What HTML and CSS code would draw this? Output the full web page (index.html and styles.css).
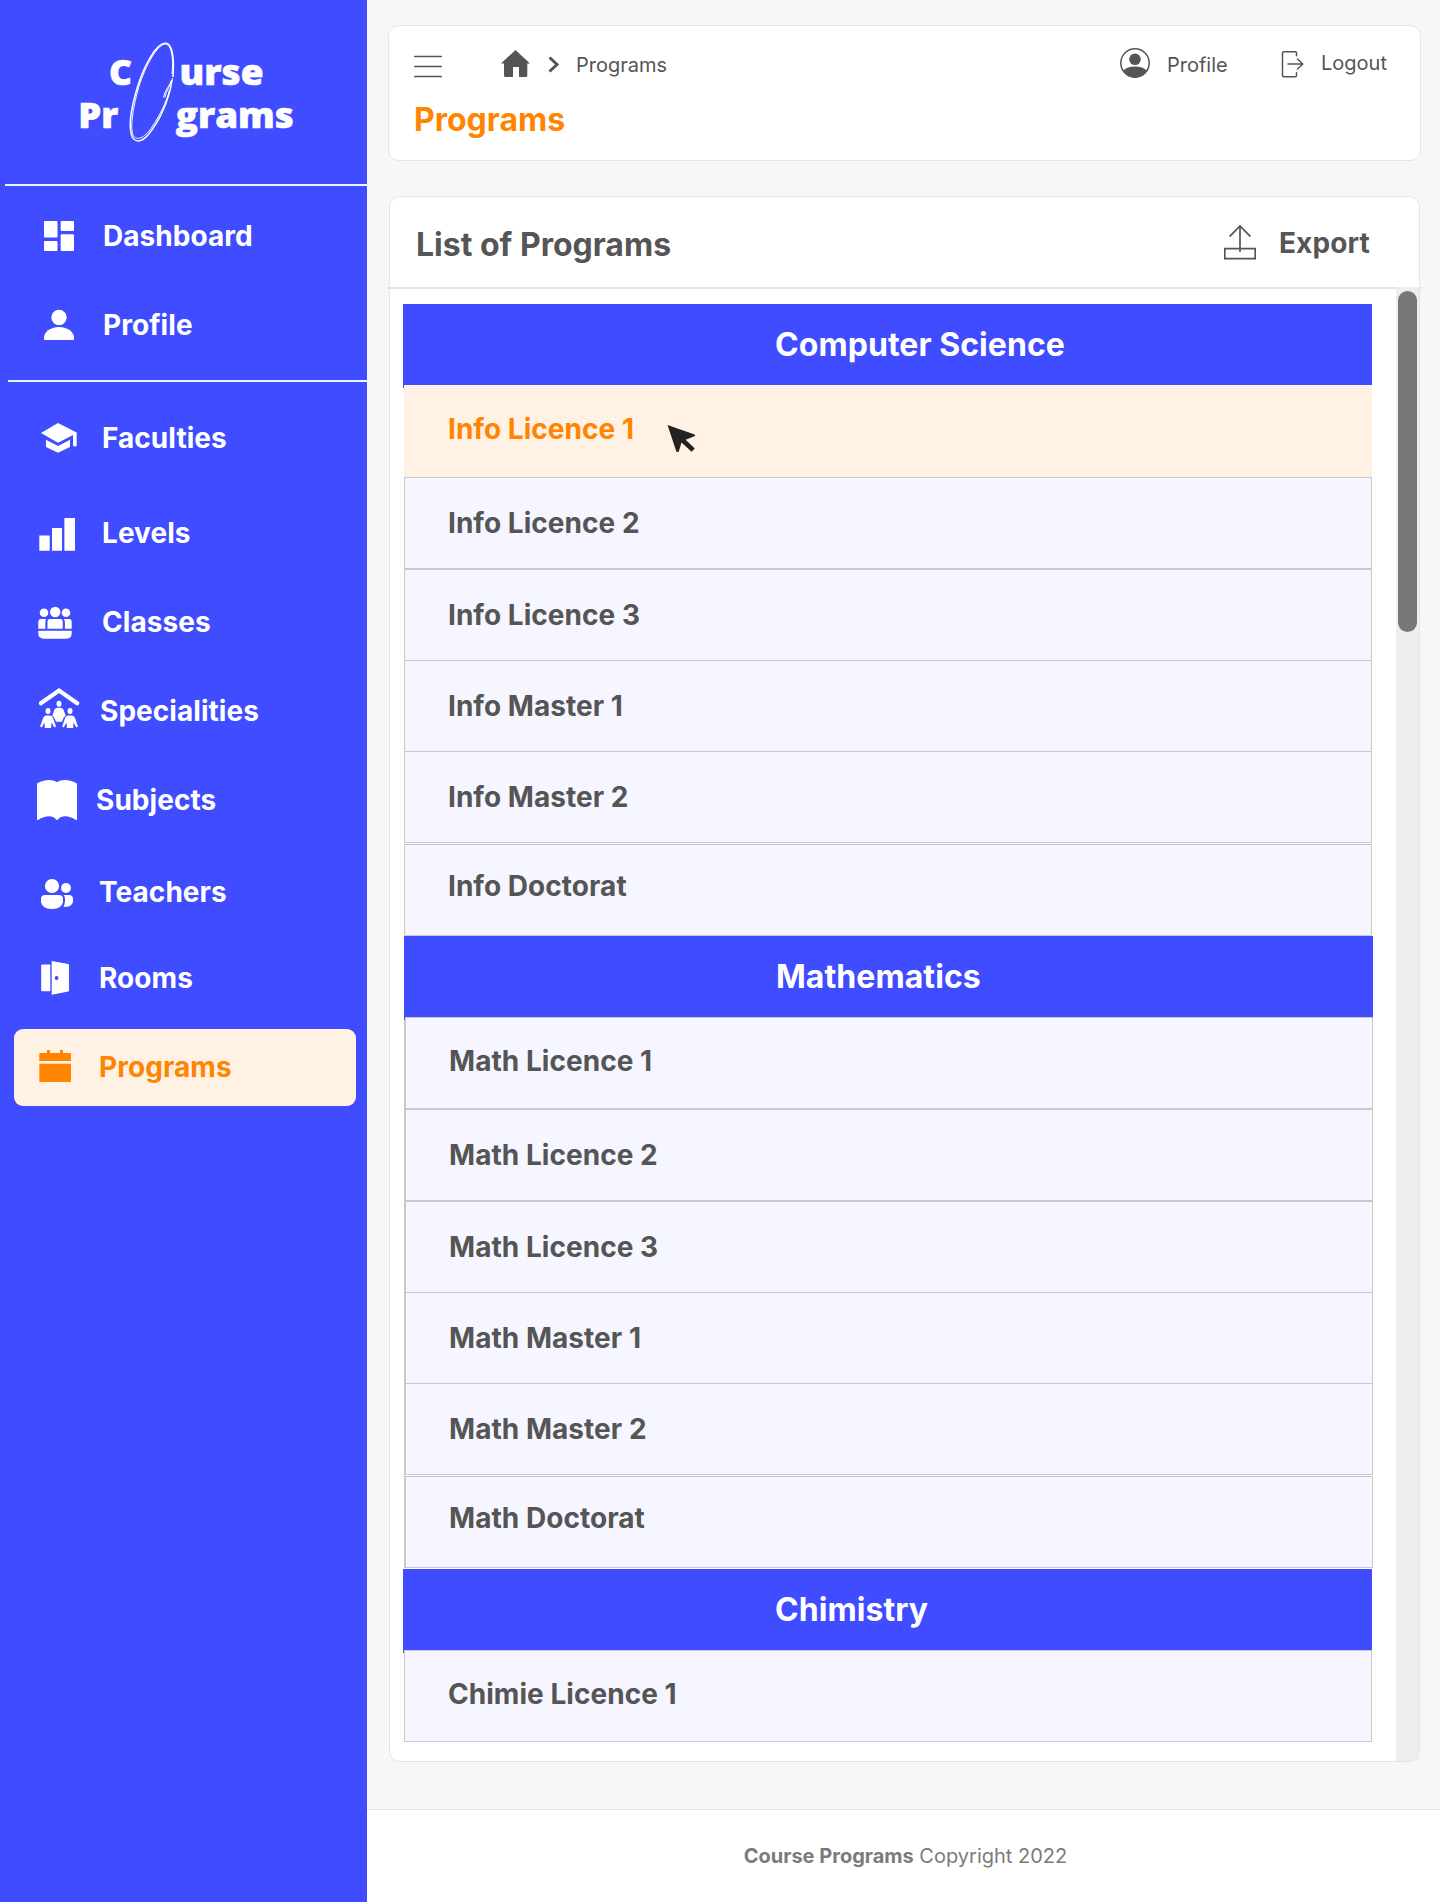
FILE: index.html
```html
<!DOCTYPE html>
<html lang="en">
<head>
<meta charset="utf-8">
<title>Course Programs</title>
<link rel="stylesheet" href="styles.css">
</head>
<body>
<div class="app">
  <aside class="sidebar">
    <svg class="logo" width="240" height="120" viewBox="70 32 240 120">
      <g class="logo-text">
        <text x="109" y="84.5" textLength="23" lengthAdjust="spacingAndGlyphs">C</text>
        <text x="179.500" y="84.5" textLength="84" lengthAdjust="spacingAndGlyphs">urse</text>
        <text x="78.300" y="128" textLength="40" lengthAdjust="spacingAndGlyphs">Pr</text>
        <text x="175.800" y="128" textLength="118" lengthAdjust="spacingAndGlyphs">grams</text>
      </g>
      <g class="logo-ring">
        <path d="M163.700 98C164 91 171 84 172.700 78"/>
        <path d="M165 97C166 91 170 87 171.500 80"/>
        <path stroke-width="1.500" d="M173 77C174.500 56 172 43 165 43.300C156 43.500 144 66 137.500 87C132 105 129 121 130.700 131C132 143 140 144 148 135C159 122 169 101 172 80"/>
        <path d="M172 74C174 54 170 43.500 165 44C156 45 143 71 138 90C133 108 129.500 129 133.500 136C138 142 146 136 152 127C160 115 166 103 169.500 90"/>
      </g>
    </svg>
    <hr class="rule rule-top">
    <nav class="nav">
      <a class="item dashboard"><svg viewBox="0 0 60 60"><rect x="14" y="15" width="13.500" height="16.500" rx="1"/><rect x="30.700" y="15" width="13.300" height="10" rx="1"/><rect x="14" y="35" width="13.500" height="10" rx="1"/><rect x="30.700" y="28.300" width="13.300" height="16.700" rx="1"/></svg><span>Dashboard</span></a>
      <a class="item profile"><svg viewBox="0 0 60 60"><circle cx="29" cy="22.500" r="7.700"/><path d="M29 32C20 32 14 37 14 43v1q0 1 1 1h28q1 0 1-1v-1C44 37 38 32 29 32z"/></svg><span>Profile</span></a>
      <hr class="rule rule-mid">
      <a class="item faculties"><svg viewBox="0 0 60 60"><path d="M11 25L28 15L46.700 24.500V37q0 1.500-1.700 1.500T43 37V27L28 34.700z"/><path d="M16 31.700L28 37.900L40 31.700V39L28 44.800L16 39z"/></svg><span>Faculties</span></a>
      <a class="item levels"><svg viewBox="0 0 60 60"><path d="M9.300 32.400h10.400v15.400H9.300zM22 25h10v22.800H22zM34.400 15H45v32.800H34.400z"/></svg><span>Levels</span></a>
      <a class="item classes"><svg viewBox="0 0 60 60"><circle cx="14" cy="20.700" r="4.300"/><circle cx="25.200" cy="20" r="5.200"/><circle cx="36" cy="20.700" r="4.300"/><path d="M10.500 27H16q-.700 1.500-.700 4v5.700H8.300V29.500q0-2.500 2.200-2.500zM20 27h10.500q2.200 0 2.200 2.200v7.500H17.500v-7.500Q17.500 27 20 27zM34 27h5.500q2.200 0 2.200 2.500v7.200h-6.800V31q0-2.500-.900-4zM8.300 38.700h33.400v2.600q0 5.400-5.400 5.400H13.700q-5.400 0-5.400-5.400z"/></svg><span>Classes</span></a>
      <a class="item specialities"><svg viewBox="0 0 60 60"><path class="roof" d="M10.900 22.300L29 9.600L47.200 22.300"/><ellipse cx="29" cy="22.700" rx="2.500" ry="3"/><ellipse cx="18" cy="30" rx="2.500" ry="2.900"/><ellipse cx="40" cy="30" rx="2.500" ry="2.900"/><path d="M27 26.700h4q1.800.3 2.500 2l2.200 6-2 1.800-1 2.500-.700 1.700h-6L25 38.500l-1-2.300-1.800-1.300 2.200-6.200q.700-1.700 2.600-2z"/><path id="figure" d="M16 34.500h4q2 .3 3 2.500l3 8.500-1.600.900-3-5-.200 5.600h-6.400l-.200-5.600-2.900 5-1.600-.9 3-8.500q.9-2.200 2.900-2.500z"/><use href="#figure" x="22"/></svg><span>Specialities</span></a>
      <a class="item subjects"><svg viewBox="0 0 60 60"><path d="M7 13.500C13 9.800 22 8.500 27 12.300C32 8.500 41 9.800 47 13.500V49.300q0 1.200-1.400.500C39 45.500 31 45 28 49.600q-1 .8-2 0C23 45 15 45.500 8.400 49.800Q7 50.500 7 49.300z"/></svg><span>Subjects</span></a>
      <a class="item teachers"><svg viewBox="0 0 60 60"><circle cx="22" cy="24" r="7.100"/><circle cx="36" cy="26" r="5"/><path d="M15 33h14q4 0 4 4v1.500C33 44 29 47 22 47S11 44 11 38.500V37q0-4 4-4zM33.600 33H39q4 0 4 4v1.500C43 43 39 45.500 33.500 44.800Q35 42 35 38.500V37q0-2.500-1.400-4z"/></svg><span>Teachers</span></a>
      <a class="item rooms"><svg viewBox="0 0 60 60"><path d="M11.200 17.500q0-1 1-1H20.300V43.300H12.200q-1 0-1-1z"/><path fill-rule="evenodd" d="M21.700 13L38.300 16q.7.200.7 1V42.500q0 .8-.7 1L21.700 46.700zM26.600 28.100a1.900 1.900 0 1 0 .01 0z"/></svg><span>Rooms</span></a>
      <a class="item programs active"><svg viewBox="0 0 60 60"><path d="M9.300 16.500q0-.5.500-.5H17v-3h3v3h10v-3h3v3h7.500q.5 0 .5.500V24H9.300zM9.300 26.800H41v17.500q0 .7-.700.700H10q-.7 0-.7-.7z"/></svg><span>Programs</span></a>
    </nav>
  </aside>

  <main class="main">
    <header class="card topbar">
      <div class="topbar-row">
        <svg class="menu" width="28" height="32" viewBox="0 0 28 32"><path d="M.700 8.600h26.600M.700 18.600h26.600M.700 28.600h26.600"/></svg>
        <svg class="home" width="30" height="32" viewBox="0 0 30 32"><path d="M14.500 2L29 15.500H26.300V27.500q0 1.500-1.500 1.500H18V19H12V29H4.500Q3 29 3 27.500V15.500H0z"/></svg>
        <svg class="chevron" width="12" height="32" viewBox="0 0 12 32"><path d="M1.500 9.500L9 16.500L1.500 23.500"/></svg>
        <span class="crumb">Programs</span>
        <svg class="avatar" width="30" height="32" viewBox="0 0 30 32"><circle class="ring" cx="15" cy="15" r="14.200"/><circle cx="15" cy="11.300" r="5.800"/><path d="M3.500 22.500Q7 18.500 15 18.500T26.500 22.500Q22 29.800 15 29.800T3.500 22.500z"/></svg>
        <span class="link link-profile">Profile</span>
        <svg class="exit" width="26" height="32" viewBox="0 0 26 32"><path d="M16.500 7.700V4.800q0-1-1-1H4Q2.500 3.800 2.500 5.200V27.200Q2.500 28.700 4 28.700H15.500q1 0 1-1V24.700M8 16H22.800M17.500 11L22.800 16L17.500 21"/></svg>
        <span class="link link-logout">Logout</span>
      </div>
      <h1>Programs</h1>
    </header>

    <section class="card list">
      <div class="list-head">
        <h2>List of Programs</h2>
        <svg class="export-icon" width="32" height="36" viewBox="0 0 32 36"><path d="M.800 24.700H31.200V34.700H.800zM16 28V2M5.500 12.700L16 2L26.500 12.700"/></svg>
        <span class="export">Export</span>
      </div>
      <div class="list-body">
        <div class="groups">
          <section class="group">
            <h3>Computer Science</h3>
            <div class="row first hover">Info Licence 1<svg class="cursor" width="30" height="30" viewBox="0 0 30 30"><path d="M.500 1L27.700 10.500L28 12L18.700 15.700L27.800 24.500L24.600 27.800L14.500 18.500L11.700 27.700L9.500 28z"/></svg></div>
            <div class="row">Info Licence 2</div>
            <div class="row">Info Licence 3</div>
            <div class="row lap">Info Master 1</div>
            <div class="row lap">Info Master 2</div>
            <div class="row last">Info Doctorat</div>
          </section>
          <section class="group shifted">
            <h3>Mathematics</h3>
            <div class="row first">Math Licence 1</div>
            <div class="row">Math Licence 2</div>
            <div class="row">Math Licence 3</div>
            <div class="row lap">Math Master 1</div>
            <div class="row lap">Math Master 2</div>
            <div class="row last">Math Doctorat</div>
          </section>
          <section class="group">
            <h3>Chimistry</h3>
            <div class="row first">Chimie Licence 1</div>
          </section>
        </div>
        <div class="track"><div class="thumb"></div></div>
      </div>
    </section>

    <footer class="footer"><p><b>Course Programs</b> Copyright 2022</p></footer>
  </main>
</div>
</body>
</html>
```
FILE: styles.css
```css
* { box-sizing: border-box; }
body { margin: 0; font-family: Inter, "Liberation Sans", sans-serif; color: #555; background: #f7f7f7; }
h1, h2, h3, p { margin: 0; }
svg { flex: none; display: block; }

.app { display: flex; height: 1902px; overflow: hidden; }

/* Sidebar */
.sidebar { width: 367px; flex: none; background: #3f4cff; color: #fff; padding-top: 32px; }
.logo { margin-left: 70px; }
.logo-text { font: 800 36px "Open Sans", "Noto Sans", sans-serif; fill: #fff; stroke: #fff; stroke-width: .600; }
.logo-ring { fill: none; stroke: #fff; stroke-width: 1; }
.rule { position: relative; width: 367px; height: 2px; margin: 0; border: 0; background: #e8f6ff; }
.rule-top { margin: 32px 0 0 5px; }
.rule-mid { margin: 38px 0 39px 8px; }
.nav { padding-top: 33px; }
.item { display: flex; height: 34px; padding-left: 30px; margin-bottom: 55px; font-size: 28px; font-weight: 700; line-height: 34px; letter-spacing: .05px; }
.item svg { width: 60px; height: 60px; margin: -13px 0; fill: currentColor; }
.item span { margin-left: 13px; }
.profile { margin-bottom: 0; }
.faculties { margin-bottom: 61px; }
.faculties span, .levels span { margin-left: 12px; }
.classes span { margin-left: 12px; }
.specialities span { margin-left: 10px; }
.subjects { margin-bottom: 58px; }
.subjects span { margin-left: 6px; }
.teachers { margin-bottom: 52px; }
.teachers span { margin-left: 9px; }
.rooms { margin-bottom: 34px; }
.rooms span, .programs span { margin-left: 9px; }
.roof { fill: none; stroke: currentColor; stroke-width: 4.200; stroke-linecap: round; }
.active { height: 77px; margin: 0 11px 0 14px; padding: 21px 0 0 16px; border-radius: 9px; background: #fff1e4; color: #ff8500; }

/* Main column */
.main { display: flex; flex-direction: column; flex: 1; min-width: 0; }
.card { background: #fff; border: 1px solid #e5e5e5; border-radius: 11px; }
.topbar { height: 136px; margin: 25px 19px 0 21px; padding-top: 22px; }
.topbar-row { display: flex; height: 32px; font-size: 20px; line-height: 24px; font-weight: 400; }
.topbar-row path, .topbar-row circle { fill: #555; }
.topbar-row .menu path, .topbar-row .chevron path, .topbar-row .exit path, .topbar-row .ring { fill: none; stroke: #555; stroke-width: 1.500; stroke-linecap: round; stroke-linejoin: round; }
.menu { margin-left: 25px; }
.home { margin-left: 59px; }
.chevron { margin-left: 17px; }
.topbar-row .chevron path { stroke-width: 3; stroke-linecap: butt; stroke-linejoin: miter; }
.crumb { padding-top: 5px; margin-left: 16px; }
.avatar { margin-left: auto; }
.link-profile { width: 113px; padding: 5px 0 0; margin-left: 17px; }
.link-logout { width: 99px; padding-top: 3px; margin-left: 15px; }
h1 { margin: 21px 0 0 25px; font-size: 32px; line-height: 38px; font-weight: 700; color: #ff8500; }

.list { height: 1566px; margin: 35px 20px 0 22px; }
.list-head { position: relative; display: flex; height: 92px; margin: 0 -3px; padding-left: 29px; border-bottom: 2px solid #e3e3e3; }
h2 { padding-top: 29px; font-size: 32px; line-height: 38px; font-weight: 700; }
.export-icon { margin: 27px 23px 0 auto; fill: none; stroke: #555; stroke-width: 1.700; }
.export { width: 143px; padding-top: 29px; font-size: 28px; line-height: 34px; font-weight: 700; letter-spacing: .1px; }
.list-body { display: flex; justify-content: space-between; height: 1472px; }
.groups { width: 983px; padding: 15px 0 0 13px; }
.group { position: relative; padding-left: 1px; margin-bottom: 1px; width: 969px; }
.group:first-child { margin-bottom: 0; }
.shifted { margin-left: 1px; padding-left: 0; border-left: 1px solid #c9c9cc; }
h3 { position: relative; height: 81px; margin-left: -1px; padding: 22px 0 0 372px; font-size: 32px; line-height: 38px; font-weight: 700; letter-spacing: .06px; color: #fff; background: #3f4cff; }
h3::after { content: ""; position: absolute; left: 0; top: 100%; width: 1px; height: 3px; background: #3f4cff; }
.row { display: flex; height: 92px; padding: 28px 0 0 43px; border: 1px solid #c9c9cc; background: #f5f6ff; font-size: 28px; line-height: 34px; font-weight: 700; letter-spacing: .04px; }
.first { padding-top: 26px; }
.lap { margin-top: -1px; }
.last { padding-top: 24px; margin-top: 1px; }
.hover { background: #fff1e4; border-color: #fff1e4; color: #ff8500; }
.cursor { margin: 12px 0 0 33px; fill: #222; }
.track { width: 23px; height: 1474px; margin-top: -2px; padding: 4px 2px 0; background: #eee; position: relative; }
.thumb { height: 341px; border-radius: 10px; background: #777; }

.footer { margin-top: auto; height: 93px; border-top: 1px solid #e6e6e6; background: #fff; padding: 34px 0 0 4px; text-align: center; font-size: 20px; line-height: 24px; color: #7b7b7b; }
.footer b { font-weight: 700; }
```
